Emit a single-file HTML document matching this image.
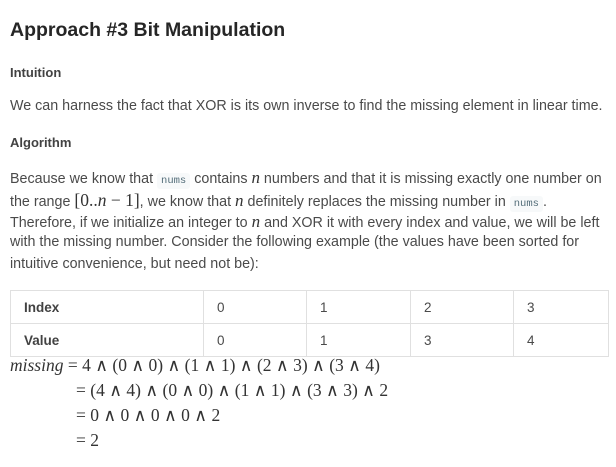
<!DOCTYPE html>
<html><head><meta charset="utf-8"><style>
body{margin:0;width:616px;height:467px;background:#fff;font-family:"Liberation Sans",sans-serif;color:#595959;position:relative;overflow:hidden}
.a{position:absolute;white-space:nowrap}
h1{position:absolute;left:10px;top:19px;margin:0;font-size:19.5px;color:#262626;font-weight:bold}
.b{font-weight:bold;font-size:13px;color:#424242}
.p{font-size:14.3px;color:#4a4a4a}
code{font-family:"Liberation Mono",monospace;font-size:10.5px;background:#f7f9fa;padding:2px 4px;border-radius:3px;color:#546e7a}
.m{font-family:"Liberation Serif",serif;font-style:italic;font-size:17px;color:#333}
.ms{font-family:"Liberation Serif",serif;font-size:17.5px;color:#333}
table{position:absolute;left:10px;top:290px;border-collapse:collapse;font-size:13.5px;color:#4a4a4a;table-layout:fixed}
td{border:1px solid #e0e0e0;height:32px;padding:0 0 0 13px}
td.h{font-weight:bold;color:#424242}
</style></head><body>
<h1>Approach #3 Bit Manipulation</h1>
<div class="a b" style="left:10px;top:65px">Intuition</div>
<div class="a p" style="left:10px;top:98px">We can harness the fact that XOR is its own inverse to find the missing element in linear time.</div>
<div class="a b" style="left:10px;top:135px">Algorithm</div>
<div class="a p" style="left:10px;top:168px">Because we know that <code>nums</code> contains <span class="m">n</span> numbers and that it is missing exactly one number on</div>
<div class="a p" style="left:10px;top:190px">the range <span class="ms">[0..<i>n</i> − 1]</span>, we know that <span class="m">n</span> definitely replaces the missing number in <code>nums</code>.</div>
<div class="a p" style="left:10px;top:212px">Therefore, if we initialize an integer to <span class="m">n</span> and XOR it with every index and value, we will be left</div>
<div class="a p" style="left:10px;top:234px">with the missing number. Consider the following example (the values have been sorted for</div>
<div class="a p" style="left:10px;top:256px">intuitive convenience, but need not be):</div>
<table>
<colgroup><col style="width:193px"><col style="width:103px"><col style="width:104px"><col style="width:103px"><col style="width:95px"></colgroup>
<tr><td class="h">Index</td><td>0</td><td>1</td><td>2</td><td>3</td></tr>
<tr><td class="h">Value</td><td>0</td><td>1</td><td>3</td><td>4</td></tr>
</table>
<div class="a ms" style="left:10px;top:355px"><i>missing</i> = 4 ∧ (0 ∧ 0) ∧ (1 ∧ 1) ∧ (2 ∧ 3) ∧ (3 ∧ 4)</div>
<div class="a ms" style="left:76px;top:380px">= (4 ∧ 4) ∧ (0 ∧ 0) ∧ (1 ∧ 1) ∧ (3 ∧ 3) ∧ 2</div>
<div class="a ms" style="left:76px;top:405px">= 0 ∧ 0 ∧ 0 ∧ 0 ∧ 2</div>
<div class="a ms" style="left:76px;top:430px">= 2</div>
</body></html>
